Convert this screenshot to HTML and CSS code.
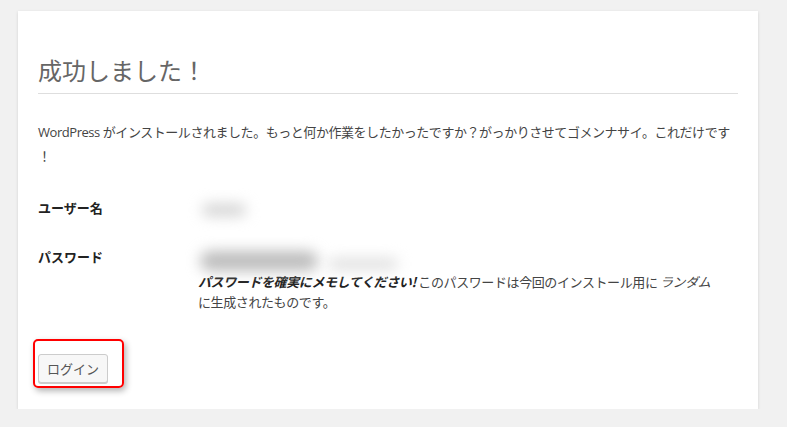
FILE: index.html
```html
<!DOCTYPE html>
<html lang="ja">
<head>
<meta charset="utf-8">
<title>WordPress › インストール</title>
<link rel="stylesheet" href="styles.css">
</head>
<body>
<main class="card">
  <h1 class="title">成功しました！</h1>
  <p class="intro">WordPress がインストールされました。もっと何か作業をしたかったですか？がっかりさせてゴメンナサイ。これだけです！</p>
  <div class="fields">
    <div class="label">ユーザー名</div>
    <div class="value"><span class="blob blob-user" aria-label="ユーザー名"></span></div>
    <div class="label">パスワード</div>
    <div class="value">
      <div class="pw-wrap"><span class="blob blob-pass"></span><span class="blob blob-pass2"></span></div>
      <p class="desc"><em>パスワードを確実にメモしてください!</em> このパスワードは今回のインストール用に <em class="rnd">ランダム</em><br>に生成されたものです。</p>
    </div>
  </div>
  <div class="actions">
    <span class="highlight"></span>
    <button class="btn" type="button">ログイン</button>
  </div>
</main>
</body>
</html>
```

FILE: styles.css
```css
html {
  background: #f1f1f1;
}
body {
  margin: 0;
  padding: 11px 0 0 18px;
  font-family: "Open Sans", "Noto Sans CJK JP", sans-serif;
  font-size: 13px;
  color: #444;
}
.card {
  width: 700px;
  background: #fff;
  padding: 23px 20px 26px;
  box-shadow: 0 1px 3px rgba(0, 0, 0, 0.13);
}
.title {
  margin: 20px 0 0;
  padding: 0 0 7px;
  font-family: "Noto Sans CJK JP", sans-serif;
  font-size: 24px;
  font-weight: normal;
  line-height: 32px;
  color: #666;
  border-bottom: 1px solid #dedede;
}
.intro {
  margin: 26px 0 0;
  line-height: 24px;
  letter-spacing: -0.45px;
  line-break: anywhere;
  font-family: "Open Sans", "Noto Sans CJK JP", sans-serif;
}
.fields {
  display: grid;
  grid-template-columns: 160px 1fr;
  row-gap: 25px;
  margin-top: 28px;
  line-height: 24px;
}
.label {
  font-weight: bold;
  color: #222;
  font-family: "Noto Sans CJK JP", sans-serif;
}
.value {
  position: relative;
}
.blob {
  display: inline-block;
  vertical-align: middle;
  border-radius: 10px;
  filter: blur(7px);
}
.blob-user {
  width: 44px;
  height: 12px;
  margin-left: 4px;
  background: #d2d2d2;
}
.pw-wrap {
  height: 27px;
  white-space: nowrap;
  display: flex;
  align-items: flex-end;
}
.blob-pass {
  width: 118px;
  height: 20px;
  margin-left: 2px;
  margin-bottom: 1px;
  background: #bdbdbd;
}
.blob-pass2 {
  width: 70px;
  height: 12px;
  margin-left: 10px;
  margin-bottom: 2px;
  background: #e0e0e0;
}
.desc {
  margin: 0;
  line-height: 20px;
  letter-spacing: -0.4px;
  font-family: "Noto Sans CJK JP", sans-serif;
}
.desc em {
  font-weight: bold;
  color: #222;
}
.desc em.rnd {
  font-weight: normal;
  color: #444;
}
.actions {
  position: relative;
  margin-top: 42px;
  height: 29px;
}
.btn {
  display: block;
  width: 70px;
  height: 29px;
  padding: 0;
  font-family: "Noto Sans CJK JP", sans-serif;
  font-size: 13px;
  color: #555;
  background: #f7f7f7;
  border: 1px solid #ccc;
  border-radius: 3px;
  box-shadow: 0 1px 0 #ccc;
}
.highlight {
  position: absolute;
  left: -5px;
  top: -15px;
  width: 87px;
  height: 45px;
  border: 2px solid #f00;
  border-radius: 5px;
  box-shadow: 2px 3px 6px rgba(0, 0, 0, 0.3);
}
```
